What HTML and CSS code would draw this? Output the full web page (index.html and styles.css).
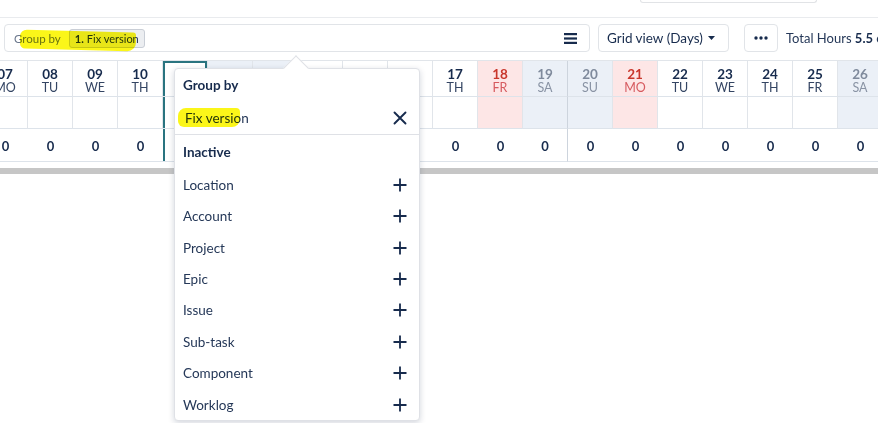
FILE: index.html
```html
<!DOCTYPE html>
<html>
<head>
<meta charset="utf-8">
<link rel="stylesheet" href="styles.css">
</head>
<body>
<div class="topbar"><div class="topbox"></div></div>

<div class="toolbar">
  <div class="groupby">
    <span class="gb-label">Group by</span>
    <span class="chip"><b>1.</b> Fix version</span>
    <svg class="menu-icon" width="13" height="11" viewBox="0 0 13 11"><rect x="0" y="0" width="13" height="2.2" fill="#172b4d"/><rect x="0" y="4.4" width="13" height="2.2" fill="#172b4d"/><rect x="0" y="8.8" width="13" height="2.2" fill="#172b4d"/></svg>
  </div>
  <div class="viewbtn"><span>Grid view (Days)</span><svg width="7" height="4" viewBox="0 0 7 4"><path d="M0 0h7L3.5 4z" fill="#172b4d"/></svg></div>
  <div class="morebtn"><svg width="14" height="4" viewBox="0 0 14 4"><circle cx="2" cy="2" r="1.7" fill="#172b4d"/><circle cx="7" cy="2" r="1.7" fill="#172b4d"/><circle cx="12" cy="2" r="1.7" fill="#172b4d"/></svg></div>
  <div class="total">Total Hours <b>5.5</b> of 40</div>
  <span class="marker marker-top"></span>
</div>

<div class="gridwrap">
  <div class="grid">
    <div class="c h"><b class="num">07</b><span class="dow">MO</span></div>
    <div class="c h"><b class="num">08</b><span class="dow">TU</span></div>
    <div class="c h"><b class="num">09</b><span class="dow">WE</span></div>
    <div class="c h"><b class="num">10</b><span class="dow">TH</span></div>
    <div class="c h today"><b class="num">11</b><span class="dow">FR</span></div>
    <div class="c h wk"><b class="num">12</b><span class="dow">SA</span></div>
    <div class="c h wk"><b class="num">13</b><span class="dow">SU</span></div>
    <div class="c h"><b class="num">14</b><span class="dow">MO</span></div>
    <div class="c h"><b class="num">15</b><span class="dow">TU</span></div>
    <div class="c h"><b class="num">16</b><span class="dow">WE</span></div>
    <div class="c h"><b class="num">17</b><span class="dow">TH</span></div>
    <div class="c h hol"><b class="num">18</b><span class="dow">FR</span></div>
    <div class="c h wk sep"><b class="num">19</b><span class="dow">SA</span></div>
    <div class="c h wk"><b class="num">20</b><span class="dow">SU</span></div>
    <div class="c h hol"><b class="num">21</b><span class="dow">MO</span></div>
    <div class="c h"><b class="num">22</b><span class="dow">TU</span></div>
    <div class="c h"><b class="num">23</b><span class="dow">WE</span></div>
    <div class="c h"><b class="num">24</b><span class="dow">TH</span></div>
    <div class="c h"><b class="num">25</b><span class="dow">FR</span></div>
    <div class="c h wk"><b class="num">26</b><span class="dow">SA</span></div>

    <div class="c e"></div>
    <div class="c e"></div>
    <div class="c e"></div>
    <div class="c e"></div>
    <div class="c e today"></div>
    <div class="c e wk"></div>
    <div class="c e wk"></div>
    <div class="c e"></div>
    <div class="c e"></div>
    <div class="c e"></div>
    <div class="c e"></div>
    <div class="c e hol"></div>
    <div class="c e wk sep"></div>
    <div class="c e wk"></div>
    <div class="c e hol"></div>
    <div class="c e"></div>
    <div class="c e"></div>
    <div class="c e"></div>
    <div class="c e"></div>
    <div class="c e wk"></div>

    <div class="c t">0</div>
    <div class="c t">0</div>
    <div class="c t">0</div>
    <div class="c t">0</div>
    <div class="c t today">0</div>
    <div class="c t sep">0</div>
    <div class="c t">0</div>
    <div class="c t">0</div>
    <div class="c t">0</div>
    <div class="c t">0</div>
    <div class="c t">0</div>
    <div class="c t">0</div>
    <div class="c t sep">0</div>
    <div class="c t">0</div>
    <div class="c t">0</div>
    <div class="c t">0</div>
    <div class="c t">0</div>
    <div class="c t">0</div>
    <div class="c t">0</div>
    <div class="c t">0</div>
  </div>
  <div class="scroll"></div>
</div>

<div class="popup">
  <span class="arrow"></span>
  <div class="pop-head">Group by</div>
  <div class="pop-row selected">
    <span>Fix version</span>
    <svg width="14" height="14" viewBox="0 0 14 14"><path d="M1.5 1.5l11 11M12.5 1.5l-11 11" stroke="#172b4d" stroke-width="1.9" stroke-linecap="round"/></svg>
    <span class="marker marker-pop"></span>
  </div>
  <div class="pop-head inactive">Inactive</div>
  <div class="pop-row"><span>Location</span><svg class="plus" width="14" height="14" viewBox="0 0 14 14"><path d="M7 0.5v13M0.5 7h13" stroke="#172b4d" stroke-width="1.8"/></svg></div>
  <div class="pop-row"><span>Account</span><svg class="plus" width="14" height="14" viewBox="0 0 14 14"><path d="M7 0.5v13M0.5 7h13" stroke="#172b4d" stroke-width="1.8"/></svg></div>
  <div class="pop-row"><span>Project</span><svg class="plus" width="14" height="14" viewBox="0 0 14 14"><path d="M7 0.5v13M0.5 7h13" stroke="#172b4d" stroke-width="1.8"/></svg></div>
  <div class="pop-row"><span>Epic</span><svg class="plus" width="14" height="14" viewBox="0 0 14 14"><path d="M7 0.5v13M0.5 7h13" stroke="#172b4d" stroke-width="1.8"/></svg></div>
  <div class="pop-row"><span>Issue</span><svg class="plus" width="14" height="14" viewBox="0 0 14 14"><path d="M7 0.5v13M0.5 7h13" stroke="#172b4d" stroke-width="1.8"/></svg></div>
  <div class="pop-row"><span>Sub-task</span><svg class="plus" width="14" height="14" viewBox="0 0 14 14"><path d="M7 0.5v13M0.5 7h13" stroke="#172b4d" stroke-width="1.8"/></svg></div>
  <div class="pop-row"><span>Component</span><svg class="plus" width="14" height="14" viewBox="0 0 14 14"><path d="M7 0.5v13M0.5 7h13" stroke="#172b4d" stroke-width="1.8"/></svg></div>
  <div class="pop-row"><span>Worklog</span><svg class="plus" width="14" height="14" viewBox="0 0 14 14"><path d="M7 0.5v13M0.5 7h13" stroke="#172b4d" stroke-width="1.8"/></svg></div>
</div>
</body>
</html>
```
FILE: styles.css
```css
* { box-sizing: border-box; }

body {
  margin: 0;
  width: 878px;
  height: 423px;
  overflow: hidden;
  position: relative;
  background: #fff;
  font-family: Lato, "Noto Sans", sans-serif;
  font-size: 13px;
  color: #172b4d;
}

.topbar {
  height: 18px;
  border-bottom: 1px solid #e9ebee;
}
.topbox {
  margin-left: 640px;
  width: 177px;
  height: 3px;
  border: 1px solid #e1e3e6;
  border-top: 0;
  border-radius: 0 0 4px 4px;
}

.toolbar {
  position: relative;
  display: flex;
  align-items: center;
  height: 28px;
  margin-top: 6px;
  padding-left: 4px;
}
.toolbar > * { flex-shrink: 0; }

.groupby {
  width: 586px;
  height: 28px;
  border: 1px solid #e1e4e8;
  border-radius: 4px;
  display: flex;
  align-items: center;
  padding: 0 12px 0 9px;
}
.gb-label {
  color: #6b778c;
  font-size: 11.5px;
}
.chip {
  margin-left: 8px;
  height: 19px;
  padding: 0 5px;
  display: flex;
  align-items: center;
  gap: 3px;
  background: #eceef1;
  border: 1px solid #c9ced6;
  border-radius: 3px;
  font-size: 11px;
  color: #253858;
}
.menu-icon { margin-left: auto; }

.viewbtn {
  margin-left: 8px;
  width: 131px;
  height: 28px;
  border: 1px solid #e1e4e8;
  border-radius: 4px;
  display: flex;
  align-items: center;
  justify-content: space-between;
  padding: 0 13px 0 8px;
  font-size: 13.5px;
}

.morebtn {
  margin-left: 15px;
  width: 34px;
  height: 28px;
  border: 1px solid #e1e4e8;
  border-radius: 4px;
  display: flex;
  align-items: center;
  justify-content: center;
}

.total {
  margin-left: 8px;
  white-space: nowrap;
  font-size: 13px;
  color: #253858;
}
.total b { color: #172b4d; }

.marker {
  position: absolute;
  background: #fbf500;
  mix-blend-mode: multiply;
  opacity: 0.9;
}
.marker-top {
  left: 20px;
  top: 7px;
  width: 116px;
  height: 19px;
  border-radius: 7px 3px 9px 5px;
  transform: skewY(1.5deg);
}

.gridwrap {
  margin-top: 8px;
  overflow: hidden;
}
.grid {
  display: grid;
  grid-template-columns: repeat(20, 45px);
  width: 900px;
  margin-left: -17px;
  border-top: 1px solid #e1e5ea;
}
.c { border-bottom: 1px solid #dde3ea; }
.h, .e { border-right: 1px solid #e1e5ea; }
.h {
  height: 36px;
  display: flex;
  flex-direction: column;
  align-items: center;
  justify-content: center;
  padding-top: 4px;
}
.e { height: 32px; }
.t {
  height: 33px;
  display: flex;
  align-items: center;
  justify-content: center;
  font-weight: 700;
  font-size: 13px;
  padding-top: 1px;
}
.sep { border-right: 1px solid #cdd4dd; }

.num {
  font-size: 13.5px;
  line-height: 13px;
  font-weight: 700;
  color: #172b4d;
}
.dow {
  font-size: 12.5px;
  line-height: 13px;
  color: #344563;
}
.wk { background: #ebf0f7; }
.wk .num { color: #7f8a9c; }
.wk .dow { color: #8993a4; }
.hol { background: #fde6e6; }
.hol .num { color: #c9372c; }
.hol .dow { color: #d65a5f; }
.t.wk, .t.hol { background: none; }

.today { box-shadow: inset 2px 0 0 #2a7480, inset -2px 0 0 #2a7480; }
.h.today { box-shadow: inset 2px 0 0 #2a7480, inset -2px 0 0 #2a7480, inset 0 2px 0 #2a7480; }

.scroll {
  margin-top: 6px;
  height: 6px;
  background: #c6c6c6;
}

.popup {
  position: absolute;
  left: 174px;
  top: 68px;
  width: 246px;
  height: 353px;
  background: #fff;
  border: 1px solid #dfe1e6;
  border-radius: 4px;
  box-shadow: 0 2px 6px rgba(9, 30, 66, 0.18);
}
.arrow {
  position: absolute;
  left: 112px;
  top: -10px;
  width: 18px;
  height: 18px;
  background: #fff;
  border-top: 1px solid #dfe1e6;
  border-left: 1px solid #dfe1e6;
  transform: rotate(45deg);
}
.pop-head {
  position: relative;
  height: 33px;
  line-height: 33px;
  padding-left: 8px;
  font-weight: 700;
  font-size: 13.5px;
  color: #172b4d;
}
.pop-head.inactive {
  height: 34px;
  line-height: 34px;
}
.pop-row {
  position: relative;
  height: 31.43px;
  display: flex;
  align-items: center;
  justify-content: space-between;
  padding: 0 12px 0 8px;
  font-size: 13.5px;
  color: #253858;
}
.pop-row.selected {
  height: 33px;
  padding-left: 10px;
  border-bottom: 1px solid #dfe1e6;
}
.marker-pop {
  left: 3px;
  top: 6px;
  width: 62px;
  height: 19px;
  border-radius: 8px 4px 8px 6px;
}
```
